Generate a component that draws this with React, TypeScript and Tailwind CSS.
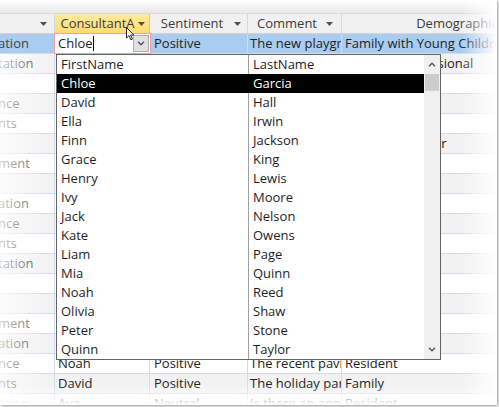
import React from "react";

type Row = { c0: string; c1: string; c2: string; c3: string; c4: string };

const rows: Row[] = [
  { c0: "ation", c1: "", c2: "Positive", c3: "The new playground area", c4: "Family with Young Children" },
  { c0: "tation", c1: "", c2: "", c3: "", c4: "Working Professional" },
  { c0: "", c1: "", c2: "", c3: "", c4: "" },
  { c0: "nce", c1: "", c2: "", c3: "", c4: "" },
  { c0: "nts", c1: "", c2: "", c3: "", c4: "" },
  { c0: "", c1: "", c2: "", c3: "", c4: "Senior Volunteer" },
  { c0: "ment", c1: "", c2: "", c3: "", c4: "" },
  { c0: "", c1: "", c2: "", c3: "", c4: "" },
  { c0: "ation", c1: "", c2: "", c3: "", c4: "" },
  { c0: "nce", c1: "", c2: "", c3: "", c4: "" },
  { c0: "nts", c1: "", c2: "", c3: "", c4: "" },
  { c0: "tation", c1: "", c2: "", c3: "", c4: "" },
  { c0: "", c1: "", c2: "", c3: "", c4: "" },
  { c0: "", c1: "", c2: "", c3: "", c4: "" },
  { c0: "ment", c1: "", c2: "", c3: "", c4: "" },
  { c0: "ation", c1: "", c2: "", c3: "", c4: "" },
  { c0: "nce", c1: "Noah", c2: "Positive", c3: "The recent pavilion", c4: "Resident" },
  { c0: "nts", c1: "David", c2: "Positive", c3: "The holiday park", c4: "Family" },
  { c0: "ation", c1: "Ava", c2: "Neutral", c3: "Is there an app", c4: "Resident" },
];

const listRows: [string, string][] = [
  ["FirstName", "LastName"],
  ["Chloe", "Garcia"],
  ["David", "Hall"],
  ["Ella", "Irwin"],
  ["Finn", "Jackson"],
  ["Grace", "King"],
  ["Henry", "Lewis"],
  ["Ivy", "Moore"],
  ["Jack", "Nelson"],
  ["Kate", "Owens"],
  ["Liam", "Page"],
  ["Mia", "Quinn"],
  ["Noah", "Reed"],
  ["Olivia", "Shaw"],
  ["Peter", "Stone"],
  ["Quinn", "Taylor"],
];

function HArrow() {
  return (
    <svg width="7" height="4" viewBox="0 0 7 4" className="shrink-0">
      <path d="M0 0H7L3.5 4Z" fill="#505050" />
    </svg>
  );
}

function Chevron({ up }: { up?: boolean }) {
  return (
    <svg width="8" height="5" viewBox="0 0 8 5">
      <path
        d={up ? "M1 4.2L4 1.2L7 4.2" : "M1 0.8L4 3.8L7 0.8"}
        fill="none"
        stroke="#555"
        strokeWidth="1.4"
      />
    </svg>
  );
}

function DataRow({ r, i }: { r: Row; i: number }) {
  const bg = i === 0 ? "bg-[#a9cdf0]" : i % 2 === 1 ? "bg-[#f2f2f2]" : "bg-white";
  return (
    <div className={`flex h-[20px] border-b border-[#d5dce8] ${bg}`}>
      <div className="w-[55px] shrink-0 overflow-hidden whitespace-nowrap border-r border-[#d5dce8] flex items-center text-[#444]">
        <span className="-ml-[2px]">{r.c0}</span>
      </div>
      {i === 0 ? (
        <div className="relative z-10 w-[95px] shrink-0 bg-white outline outline-[#f0a2ab] flex items-center pl-[3px]">
          <span>Chloe</span>
          <span className="w-[1px] h-[15px] bg-black" />
          <div className="ml-auto mr-[1px] w-[16px] h-[17px] bg-[#e1e1e1] border border-[#b0b0b0] flex items-center justify-center">
            <Chevron />
          </div>
        </div>
      ) : (
        <div className="w-[95px] shrink-0 overflow-hidden whitespace-nowrap border-r border-[#d5dce8] flex items-center pl-[3px]">
          {r.c1}
        </div>
      )}
      <div className="w-[98px] shrink-0 overflow-hidden whitespace-nowrap border-r border-[#d5dce8] flex items-center pl-[4px]">
        {r.c2}
      </div>
      <div className="w-[94px] shrink-0 overflow-hidden whitespace-nowrap border-r border-[#d5dce8] flex items-center pl-[2px]">
        {r.c3}
      </div>
      <div className="w-[244px] shrink-0 overflow-hidden whitespace-nowrap border-r border-[#d5dce8] flex items-center pl-[3px]">
        {r.c4}
      </div>
    </div>
  );
}

export default function App() {
  return (
    <div className="w-[499px] h-[407px] bg-white font-['Open_Sans','Noto_Sans',sans-serif] text-[13px] text-[#222]">
      <div className="relative w-[497px] h-[405px] overflow-hidden bg-white shadow-[1px_1px_3px_rgba(0,0,0,0.45)]">
        <div className="h-[14px] bg-linear-to-b from-white to-[#e8e8e8] border-b border-[#dadada]" />
        <div className="flex h-[20px] bg-[#f0f0f0] border-b border-[#d5d5d5] text-[#3c3c3c]">
          <div className="w-[55px] shrink-0 border-r border-[#d8d8d8] flex items-center justify-end pr-[7px]">
            <HArrow />
          </div>
          <div className="w-[95px] shrink-0 border-r border-[#e0c878] bg-linear-to-b from-[#feeb9c] to-[#fcdc6e] flex items-center">
            <span className="flex-1 text-center whitespace-nowrap pl-[2px]">ConsultantA</span>
            <span className="mr-[4px] flex"><HArrow /></span>
          </div>
          <div className="w-[98px] shrink-0 border-r border-[#d8d8d8] flex items-center">
            <span className="flex-1 text-center whitespace-nowrap">Sentiment</span>
            <span className="mr-[6px] flex"><HArrow /></span>
          </div>
          <div className="w-[94px] shrink-0 border-r border-[#d8d8d8] flex items-center">
            <span className="flex-1 text-center whitespace-nowrap">Comment</span>
            <span className="mr-[8px] flex"><HArrow /></span>
          </div>
          <div className="w-[244px] shrink-0 border-r border-[#d8d8d8] flex items-center">
            <span className="flex-1 text-center whitespace-nowrap">Demographic</span>
            <span className="mr-[6px] flex"><HArrow /></span>
          </div>
        </div>
        {rows.map((r, i) => (
          <DataRow key={i} r={r} i={i} />
        ))}

        {/* dropdown list */}
        <div className="absolute left-[56px] top-[54px] w-[385px] border border-[#646464] bg-white flex text-[#1e1e1e] z-20">
          <div className="w-[367px]">
            {listRows.map((r, i) => (
              <div key={i} className={i === 1 ? "flex h-[19px] bg-black text-white" : "flex h-[19px]"}>
                <div className={i === 1 ? "w-[192px] border-r border-black pl-[4px] flex items-center" : "w-[192px] border-r border-[#a0a0a0] pl-[4px] flex items-center"}>
                  {r[0]}
                </div>
                <div className="w-[175px] pl-[4px] flex items-center">{r[1]}</div>
              </div>
            ))}
          </div>
          <div className="w-[16px] bg-[#f0f0f0] flex flex-col">
            <div className="h-[19px] flex items-center justify-center">
              <Chevron up />
            </div>
            <div className="h-[17px] mx-[1px] bg-[#cdcdcd]" />
            <div className="flex-1" />
            <div className="h-[19px] flex items-center justify-center">
              <Chevron />
            </div>
          </div>
        </div>

        {/* fades */}
        <div className="absolute left-0 top-[54px] bottom-0 w-[50px] bg-linear-to-r from-white/75 to-white/0 pointer-events-none" />
        <div className="absolute right-0 top-0 bottom-0 w-[36px] bg-linear-to-r from-white/0 to-white pointer-events-none z-30" />
        <div className="absolute left-0 right-0 bottom-0 h-[20px] bg-linear-to-b from-white/0 to-white pointer-events-none z-30" />

        {/* mouse cursor */}
        <svg className="absolute left-[126px] top-[27px] z-40" width="9" height="14" viewBox="0 0 9 14">
          <path
            d="M0.5 0.5V11L3 8.6L4.8 12.8L6.4 12.1L4.6 8H7.8Z"
            fill="white"
            stroke="#222"
            strokeWidth="1"
            strokeLinejoin="round"
          />
        </svg>
      </div>
    </div>
  );
}
